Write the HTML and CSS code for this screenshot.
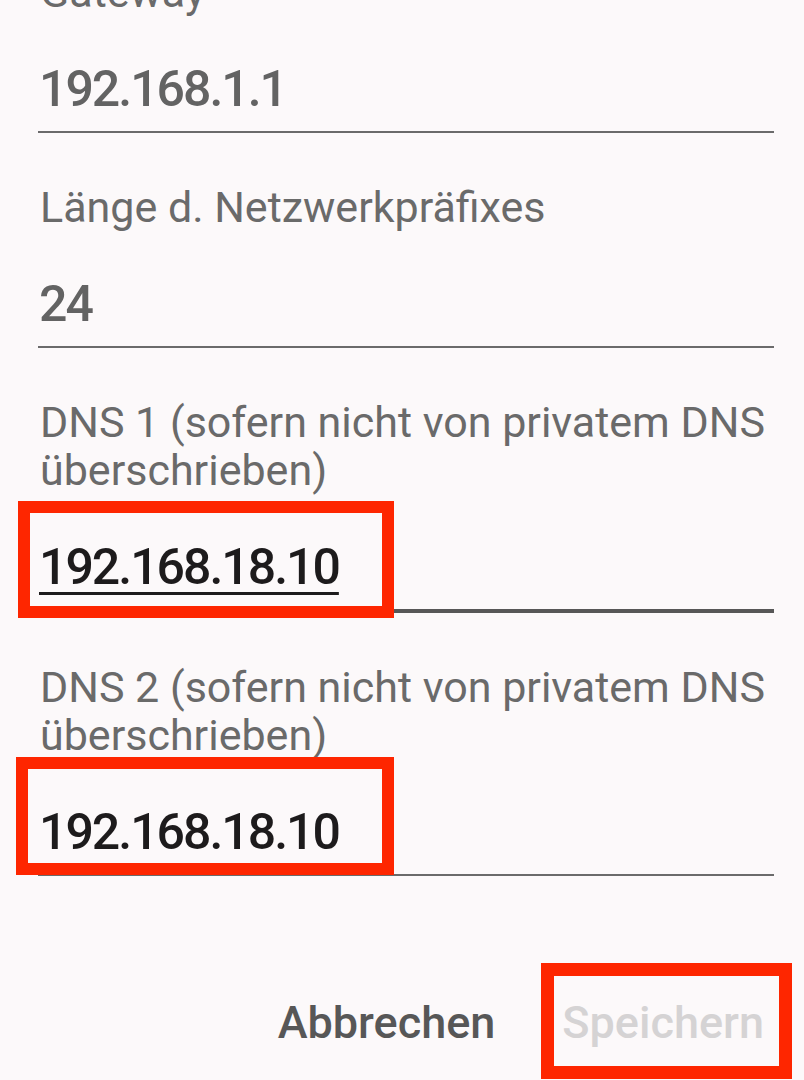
FILE: index.html
```html
<!DOCTYPE html>
<html lang="de">
<head>
<meta charset="utf-8">
<title>IP-Einstellungen</title>
<link rel="stylesheet" href="styles.css">
</head>
<body>
<div class="page">
  <form class="form">
    <div class="field field-first">
      <div class="label">Gateway</div>
      <div class="value">192.168.1.1</div>
    </div>
    <div class="field">
      <div class="label">Länge d. Netzwerkpräfixes</div>
      <div class="value">24</div>
    </div>
    <div class="field field-focused">
      <div class="label">DNS 1 (sofern nicht von privatem DNS überschrieben)</div>
      <div class="value value-dark"><span class="composing">192.168.18.10</span></div>
    </div>
    <div class="field">
      <div class="label">DNS 2 (sofern nicht von privatem DNS überschrieben)</div>
      <div class="value value-dark">192.168.18.10</div>
    </div>
    <div class="actions">
      <button type="button" class="btn btn-cancel">Abbrechen</button>
      <button type="button" class="btn btn-save" disabled>Speichern</button>
    </div>
  </form>
  <div class="mark mark-dns1"></div>
  <div class="mark mark-dns2"></div>
  <div class="mark mark-save"></div>
</div>
</body>
</html>
```
FILE: styles.css
```css
* { box-sizing: border-box; }
html, body {
  margin: 0;
  padding: 0;
  background: #fcf9fa;
}
body {
  font-family: Roboto, "Noto Sans", "Liberation Sans", sans-serif;
  overflow: hidden;
}
.page {
  position: relative;
  width: 804px;
  height: 1080px;
  overflow: hidden;
}
.form {
  display: flex;
  flex-direction: column;
  padding: 0 30px 0 38px;
}
.field {
  display: flex;
  flex-direction: column;
  margin-top: 50px;
  border-bottom: 2px solid #6b6b6b;
  padding-bottom: 12px;
}
.field-first { margin-top: -32px; }
.field-focused {
  border-bottom: 4px solid #575757;
}
.label {
  font-size: 43px;
  line-height: 48px;
  color: #6a6a6a;
  padding-left: 2px;
}
.value {
  margin-top: 43px;
  font-size: 50px;
  font-weight: 500;
  line-height: 60px;
  letter-spacing: -2px;
  color: #636363;
  padding-left: 1px;
}
.value-dark { color: #1d1b1c; }
.composing {
  text-decoration: underline;
  text-decoration-thickness: 3px;
  text-underline-offset: 8px;
  text-decoration-skip-ink: none;
  text-decoration-color: #1d1b1c;
}
.actions {
  display: flex;
  justify-content: flex-end;
  gap: 67px;
  margin-top: 121px;
  padding-right: 10px;
}
.btn {
  font-family: Roboto, "Noto Sans", "Liberation Sans", sans-serif;
  font-weight: 500;
  font-size: 45px;
  line-height: 52px;
  background: none;
  border: 0;
  padding: 0;
  margin: 0;
}
.btn-cancel { color: #575757; }
.btn-save { color: #d5d3d4; }
.mark {
  position: absolute;
  border: 12px solid #fe2600;
}
.mark-dns1 { left: 18px; top: 501px; width: 376px; height: 117px; }
.mark-dns2 { left: 16px; top: 757px; width: 378px; height: 118px; }
.mark-save { left: 541px; top: 963px; width: 251px; height: 116px; border-width: 13px; }
```
